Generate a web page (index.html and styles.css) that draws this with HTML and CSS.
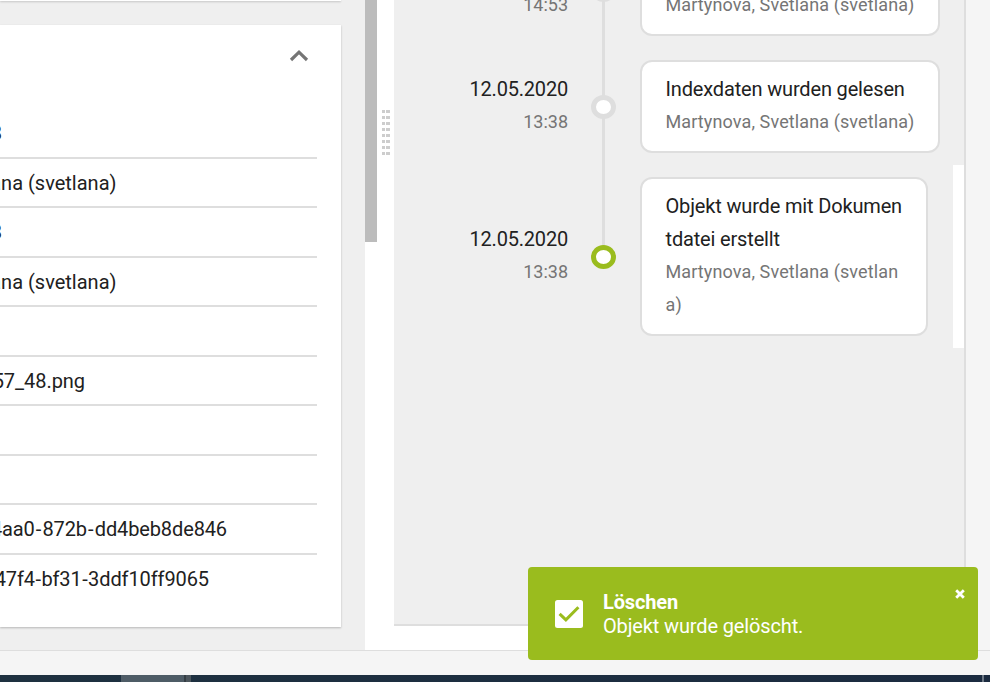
FILE: index.html
```html
<!DOCTYPE html>
<html lang="de">
<head>
<meta charset="utf-8">
<title>Verlauf</title>
<link rel="stylesheet" href="styles.css">
</head>
<body>
<div class="app">
  <div class="main">
    <section class="details">
      <div class="panel panel-prev"></div>
      <div class="panel">
        <div class="panel-head">
          <svg class="chevron" width="20" height="14" viewBox="0 0 20 14"><path d="M2 11 10 3.2l8 7.8" fill="none" stroke="#757575" stroke-width="3.2"/></svg>
        </div>
        <div class="rows">
          <div class="row"><span class="value end-3">8</span></div>
          <div class="row"><span class="value end-name">ana (svetlana)</span></div>
          <div class="row"><span class="value end-3">8</span></div>
          <div class="row"><span class="value end-name">ana (svetlana)</span></div>
          <div class="row"></div>
          <div class="row"><span class="value end-file">57_48.png</span></div>
          <div class="row"></div>
          <div class="row"></div>
          <div class="row"><span class="value end-id"><span>4aa0<span class="dash">-</span>872b<span class="dash">-</span>dd4beb8de846</span></span></div>
          <div class="row"><span class="value end-version"><span>47f4<span class="dash">-</span>bf31<span class="dash">-</span>3ddf10ff9065</span></span></div>
        </div>
      </div>
    </section>
    <div class="scrollbar"><div class="thumb"></div></div>
    <div class="splitter"><div class="grip"></div></div>
    <section class="history">
      <div class="timeline">
        <div class="item">
          <div class="when"><div class="date">12.05.2020</div><div class="sub">14:53</div></div>
          <div class="rail"><i class="dot"></i></div>
          <div class="card"><div class="title">Indexdaten wurden gelesen</div><div class="sub">Martynova, Svetlana (svetlana)</div></div>
        </div>
        <div class="item">
          <div class="when"><div class="date">12.05.2020</div><div class="sub">13:38</div></div>
          <div class="rail"><i class="dot"></i></div>
          <div class="card"><div class="title">Indexdaten wurden gelesen</div><div class="sub">Martynova, Svetlana (svetlana)</div></div>
        </div>
        <div class="item last">
          <div class="when"><div class="date">12.05.2020</div><div class="sub">13:38</div></div>
          <div class="rail"><i class="dot"></i></div>
          <div class="card narrow"><div class="title">Objekt wurde mit Dokumen<br>tdatei erstellt</div><div class="sub">Martynova, Svetlana (svetlan<br>a)</div></div>
        </div>
      </div>
      <div class="track"></div>
    </section>
    <div class="gutter"></div>
  </div>
  <div class="status"></div>
  <div class="taskbar"><div class="task"></div><div class="task-edge"></div><div class="show-desktop"></div></div>
</div>
<div class="toast">
  <svg class="check" width="28" height="28" viewBox="0 0 28 28"><rect width="28" height="28" rx="2.5" fill="#fff"/><path d="M4.6 13.8l6.3 6.1L23.4 7.3" fill="none" stroke="#9abc1e" stroke-width="3"/></svg>
  <div class="message"><strong>Löschen</strong><span>Objekt wurde gelöscht.</span></div>
  <svg class="close" width="10" height="10" viewBox="0 0 10 10"><path d="M1.2 1.2l7.6 7.6M8.8 1.2L1.2 8.8" stroke="#fff" stroke-width="2.8"/></svg>
</div>
</body>
</html>
```
FILE: styles.css
```css
* { box-sizing: border-box; }
body {
  margin: 0;
  font: 20px/33px Roboto, sans-serif;
  color: #212121;
  overflow: hidden;
}
.app { display: flex; flex-direction: column; height: 682px; }
.main { display: flex; height: 650px; background: #fff; }

.details { width: 365px; background: #efefef; overflow: hidden; }
.panel {
  width: 341px;
  height: 602px;
  padding-right: 24px;
  background: #fff;
  box-shadow: 0 1px 2px rgba(0, 0, 0, .24);
}
.panel-prev { height: 1px; margin-bottom: 24px; }
.panel-head { display: flex; justify-content: flex-end; height: 84.4px; padding: 24px 8px 0 0; }
.row { display: flex; align-items: center; height: 49.5px; padding-top: 1px; border-bottom: 2px solid #dedede; white-space: nowrap; }
.row:last-child { border-bottom-color: transparent; }
.value { display: flex; justify-content: flex-end; overflow: hidden; }
.end-3 { width: 2px; }
.end-name { width: 116.5px; }
.end-file { width: 85px; letter-spacing: -.05px; }
.end-id { width: 227px; letter-spacing: -.12px; }
.end-version { width: 209px; letter-spacing: -.1px; }
.dash { padding: 0 1.2px; }
.end-version .dash { padding: 0 .5px; }

.scrollbar { width: 12px; }
.thumb { height: 242px; background: #bcbcbc; }
.splitter { width: 17px; padding: 110px 0 0 5px; }
.grip {
  width: 8px;
  height: 45px;
  background:
    repeating-linear-gradient(180deg, transparent 0 3px, #fff 3px 6px),
    linear-gradient(90deg, #cdcdcd 3px, #fff 3px 4px, #cdcdcd 4px);
}

.history {
  display: flex;
  width: 572px;
  height: 626px;
  background: #efefef;
  border-right: 2px solid #dedede;
  border-bottom: 2px solid #dedede;
  overflow: hidden;
}
.timeline { width: 559px; margin-top: -57px; }
.item { display: flex; align-items: center; margin-bottom: 24px; }
.when { width: 174px; margin-top: -2px; text-align: right; }
.date { letter-spacing: -.2px; }
.title { letter-spacing: -.16px; }
.sub { position: relative; top: -1px; font-size: 18px; color: #757575; }
.card .sub { letter-spacing: .11px; }
.rail { position: relative; display: flex; align-self: stretch; align-items: center; width: 25px; margin: 0 24px 0 23px; }
.rail::before { content: ""; position: absolute; left: 11px; top: 50%; width: 3px; height: 151px; background: #dedede; }
.last .rail::before { display: none; }
.dot { position: relative; z-index: 1; width: 25px; height: 24px; border: 5px solid #dedede; border-radius: 50%; background: #fff; }
.last .dot { border-color: #9abc1e; }
.card { width: 300px; padding: 11px 0 12px 23.5px; border: 2px solid #dedede; border-radius: 12px; background: #fff; white-space: nowrap; }
.narrow { width: 288px; }
.track { width: 11px; height: 183px; margin-top: 165px; background: #fff; }
.gutter { width: 24px; background: #f5f5f5; }

.status { height: 25px; background: #f5f5f5; border-top: 1px solid #dedede; }
.taskbar { display: flex; height: 7px; background: linear-gradient(90deg, #1e3140, #1b2b40); }
.task { width: 63px; margin-left: 121px; background: #4e5c66; }
.task-edge { width: 7px; border-left: 2px solid #343e44; background: #4b555c; }
.show-desktop { width: 2px; margin-left: 791px; background: #6c7784; }

.toast {
  position: absolute;
  left: 528px;
  top: 567px;
  display: flex;
  width: 450px;
  height: 93px;
  padding: 23px 13.5px 0 27px;
  border-radius: 4px;
  background: #9abc1e;
  color: #fff;
  line-height: 24px;
  letter-spacing: -.14px;
}
.check { margin: 10px 20px 0 0; }
.message { display: flex; flex: 1; flex-direction: column; }
.close { margin-top: -1px; }
```
